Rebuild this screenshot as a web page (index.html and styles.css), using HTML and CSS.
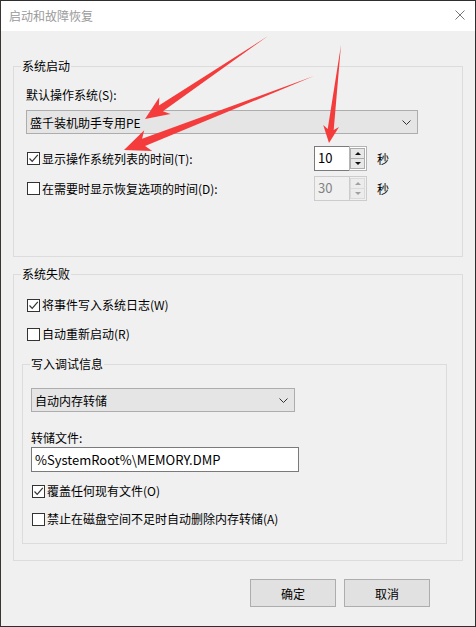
FILE: index.html
```html
<!DOCTYPE html>
<html lang="zh-CN">
<head>
    <meta charset="UTF-8">
    <title>启动和故障恢复</title>
    <link rel="stylesheet" href="styles.css">
</head>
<body>

    <!-- Cửa sổ hộp thoại -->
    <div class="window">
        <span class="edge edge-top"></span>
        <span class="edge edge-bottom"></span>

        <!-- Thanh tiêu đề -->
        <div class="titlebar">
            <span class="title">启动和故障恢复</span>
            <svg class="close" width="10" height="10" viewBox="0 0 10 10">
                <path d="M0.5 0.5 L9.5 9.5 M9.5 0.5 L0.5 9.5" stroke="#777" stroke-width="1" fill="none"/>
            </svg>
        </div>

        <!-- Nhóm khởi động hệ thống -->
        <fieldset class="group group-startup">
            <legend>系统启动</legend>
            <div class="field-label">默认操作系统(S):</div>
            <div class="combo combo-os">
                <span>盛千装机助手专用PE</span>
                <svg class="chevron" width="9" height="5" viewBox="0 0 9 5"><path d="M0.5 0.5 L4.5 4.5 L8.5 0.5" stroke="#333" fill="none"/></svg>
            </div>

            <div class="timer-row">
                <label class="check">
                    <span class="box"><svg width="11" height="11" viewBox="0 0 11 11"><path d="M1.5 5.5 L4.2 8.3 L9.8 1.8" stroke="#333" stroke-width="1.2" fill="none"/></svg></span>
                    显示操作系统列表的时间(T):
                </label>
                <div class="spin">
                    <span class="spin-value">10</span>
                    <span class="spin-btns">
                        <span class="spin-btn"><i class="tri up"></i></span>
                        <span class="spin-btn"><i class="tri down"></i></span>
                    </span>
                </div>
                <span class="unit">秒</span>
            </div>

            <div class="timer-row">
                <label class="check">
                    <span class="box"></span>
                    在需要时显示恢复选项的时间(D):
                </label>
                <div class="spin disabled">
                    <span class="spin-value">30</span>
                    <span class="spin-btns">
                        <span class="spin-btn"><i class="tri up"></i></span>
                        <span class="spin-btn"><i class="tri down"></i></span>
                    </span>
                </div>
                <span class="unit">秒</span>
            </div>
        </fieldset>

        <!-- Nhóm lỗi hệ thống -->
        <fieldset class="group group-failure">
            <legend>系统失败</legend>
            <label class="check row">
                <span class="box"><svg width="11" height="11" viewBox="0 0 11 11"><path d="M1.5 5.5 L4.2 8.3 L9.8 1.8" stroke="#333" stroke-width="1.2" fill="none"/></svg></span>
                将事件写入系统日志(W)
            </label>
            <label class="check row row-next">
                <span class="box"></span>
                自动重新启动(R)
            </label>

            <!-- Thông tin gỡ lỗi -->
            <fieldset class="debug">
                <legend>写入调试信息</legend>
                <div class="combo combo-dump">
                    <span>自动内存转储</span>
                    <svg class="chevron" width="9" height="5" viewBox="0 0 9 5"><path d="M0.5 0.5 L4.5 4.5 L8.5 0.5" stroke="#333" fill="none"/></svg>
                </div>
                <div class="field-label dump-label">转储文件:</div>
                <div class="textbox">%SystemRoot%\MEMORY.DMP</div>
                <label class="check row dump-first">
                    <span class="box"><svg width="11" height="11" viewBox="0 0 11 11"><path d="M1.5 5.5 L4.2 8.3 L9.8 1.8" stroke="#333" stroke-width="1.2" fill="none"/></svg></span>
                    覆盖任何现有文件(O)
                </label>
                <label class="check row dump-next">
                    <span class="box"></span>
                    禁止在磁盘空间不足时自动删除内存转储(A)
                </label>
            </fieldset>
        </fieldset>

        <!-- Nút xác nhận / hủy -->
        <div class="buttons">
            <button class="btn">确定</button>
            <button class="btn">取消</button>
        </div>

        <!-- Mũi tên chú thích màu đỏ -->
        <svg class="arrows" width="476" height="627" viewBox="0 0 476 627">
            <polygon points="268,36 158.9,105.4 159.3,97.3 145,119 170.5,113.9 162.9,111.2"/>
            <polygon points="314,76 142.1,138.7 144.2,130.3 124,150 152.2,150.9 145.1,146.1"/>
            <polygon points="341,45 327.7,129.1 323.2,125.1 329,143 339,127.1 333.7,129.9"/>
        </svg>
    </div>

</body>
</html>
```
FILE: styles.css
```css
/* Nền trang */
body {
    margin: 0;
    background: #f0f0f0;
    font-family: "Noto Sans CJK SC", "Noto Sans", sans-serif;
    font-size: 12px;
    color: #000;
}

/* Khung cửa sổ */
.window {
    position: relative;
    width: 476px;
    height: 627px;
    box-sizing: border-box;
    border: 1px solid #2e2e2e;
    border-left-color: #3a3434;
    background: #f0f0f0;
    overflow: hidden;
}

/* Đoạn viền sáng trên và dưới */
.edge {
    position: absolute;
    left: 301px;
    width: 62px;
    height: 1px;
    background: #c6c6c6;
}

.edge-top {
    top: -1px;
}

.edge-bottom {
    bottom: -1px;
}

/* Thanh tiêu đề */
.titlebar {
    height: 30px;
    background: #fff;
    display: flex;
    align-items: center;
    justify-content: space-between;
    padding: 0 10px 0 8px;
}

.title {
    color: #9a9a9a;
    line-height: 16px;
    margin-top: -1px;
}

.close {
    display: block;
    margin-top: -2px;
}

/* Khung nhóm */
.group {
    width: 450px;
    box-sizing: border-box;
    margin: 0 0 0 12px;
    border: 1px solid #dcdcdc;
    padding: 0;
    min-width: 0;
}

.group legend,
.debug legend {
    padding: 0 1px;
    line-height: 14px;
}

.group-startup {
    margin-top: 28px;
    padding: 14px 43px 55px 12px;
}

.group-startup legend {
    margin-left: -5px;
}

.group-failure {
    margin-top: 10px;
    padding: 14px 14px 16px 8px;
}

.group-failure legend {
    margin-left: -1px;
}

/* Nhãn trường */
.field-label {
    line-height: 16px;
}

/* Hộp chọn thả xuống */
.combo {
    margin-top: 7px;
    height: 24px;
    box-sizing: border-box;
    border: 1px solid #adadad;
    background: #e5e5e5;
    display: flex;
    align-items: center;
    justify-content: space-between;
    padding: 0 6px 0 3px;
}

.combo-os {
    width: 392px;
}

.combo-dump {
    width: 264px;
    margin-top: 0;
}

/* Hàng chọn thời gian */
.timer-row {
    display: grid;
    grid-template-columns: 288px 53px auto;
    align-items: center;
    height: 25px;
    margin-top: 5px;
}

.timer-row .unit {
    margin-left: 10px;
}

.combo + .timer-row {
    margin-top: 12px;
}

/* Ô đánh dấu */
.check {
    display: flex;
    align-items: center;
    line-height: 16px;
    white-space: nowrap;
}

.check .box {
    width: 13px;
    height: 13px;
    box-sizing: border-box;
    border: 1px solid #333;
    background: #fff;
    margin: 0 2px 0 1px;
    flex: none;
}

.check .box svg {
    display: block;
}

.row {
    height: 20px;
}

.group-failure > .row {
    margin-left: 4px;
}

.row-next {
    margin-top: 9px;
}

/* Ô số có nút tăng giảm */
.spin {
    display: flex;
    height: 25px;
    box-sizing: border-box;
}

.spin-value {
    flex: 1;
    background: #fff;
    border: 1px solid #7a7a7a;
    border-right: none;
    padding-left: 3px;
    line-height: 22px;
    font-size: 13px;
}

.spin-btns {
    width: 18px;
    box-sizing: border-box;
    border: 1px solid #b4b4b4;
    background: #fff;
    padding: 1px 1px 1px 0;
    display: flex;
    flex-direction: column;
}

.spin-btn {
    flex: 1;
    border: 1px solid #adadad;
    background: #e8e8e8;
    display: flex;
    align-items: center;
    justify-content: center;
}

.spin-btn + .spin-btn {
    border-top: none;
}

.tri {
    width: 0;
    height: 0;
    border-left: 3px solid transparent;
    border-right: 3px solid transparent;
}

.tri.up {
    border-bottom: 3px solid #111;
}

.tri.down {
    border-top: 3px solid #111;
}

.spin.disabled .spin-value {
    background: #f0f0f0;
    border-color: #cccccc;
    color: #838383;
}

.spin.disabled .spin-btns {
    border-color: #cccccc;
    background: #f0f0f0;
}

.spin.disabled .spin-btn {
    border-color: #dadada;
    background: #ececec;
}

.spin.disabled .tri.up {
    border-bottom-color: #a0a0a0;
}

.spin.disabled .tri.down {
    border-top-color: #a0a0a0;
}

/* Khung thông tin gỡ lỗi */
.debug {
    margin: 13px 0 0 0;
    width: 425px;
    box-sizing: border-box;
    border: 1px solid #dcdcdc;
    padding: 17px 8px 14px 8px;
    min-width: 0;
}

.debug legend {
    margin-left: -1px;
}

.dump-label {
    margin-top: 18px;
}

/* Ô nhập đường dẫn */
.textbox {
    margin-top: 1px;
    width: 268px;
    height: 25px;
    box-sizing: border-box;
    border: 1px solid #7a7a7a;
    background: #fff;
    padding-left: 3px;
    line-height: 23px;
    font-size: 13px;
}

.dump-first {
    margin-top: 9px;
}

.dump-next {
    margin-top: 8px;
}

/* Hàng nút */
.buttons {
    display: flex;
    justify-content: flex-end;
    gap: 8px;
    margin-top: 18px;
    padding-right: 45px;
}

.btn {
    width: 86px;
    height: 28px;
    border: 1px solid #adadad;
    background: #e1e1e1;
    font-family: inherit;
    font-size: 12px;
    color: #000;
    padding: 0;
}

/* Lớp mũi tên phủ lên trên */
.arrows {
    position: absolute;
    left: -1px;
    top: -1px;
    pointer-events: none;
}

.arrows polygon {
    fill: #f53c3c;
}
```
